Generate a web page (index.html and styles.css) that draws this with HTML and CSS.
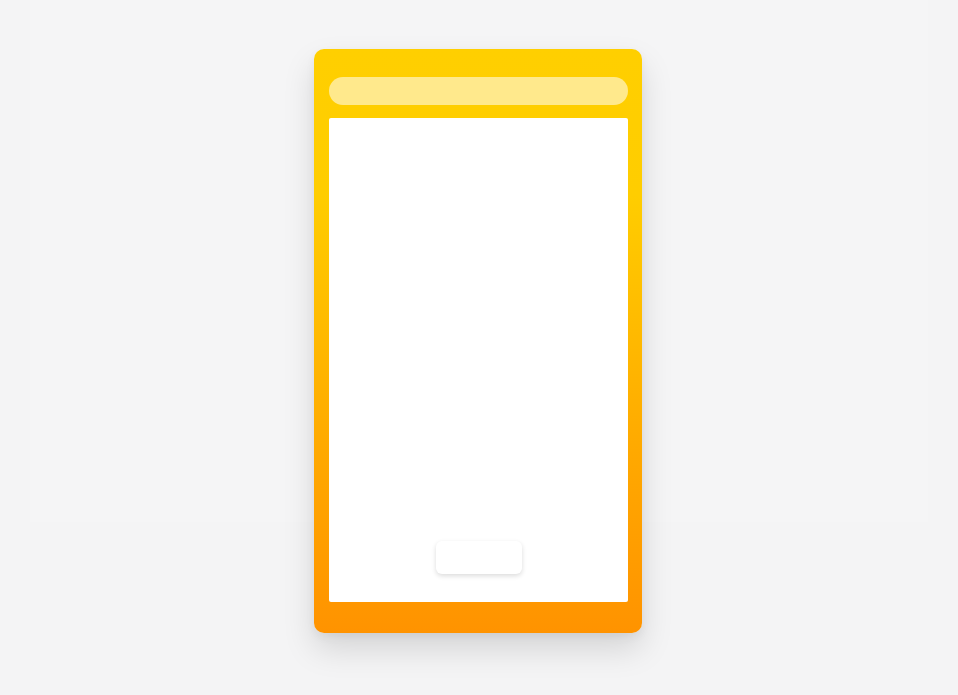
FILE: index.html
```html
<!DOCTYPE html>
<html>
<head>
<meta charset="utf-8">
<link rel="stylesheet" href="styles.css">
</head>
<body>
<div class="card">
  <div class="search"></div>
  <div class="content">
    <div class="button"></div>
  </div>
</div>
</body>
</html>
```
FILE: styles.css
```css
html {
  background: linear-gradient(#f5f5f6, #f5f5f6) 30px 0 / 898px 522px no-repeat, #f4f4f5;
}
body {
  margin: 0;
  padding: 49px 0 62px;
  min-height: 695px;
  box-sizing: border-box;
  font-family: "Liberation Sans", Arial, sans-serif;
}
.card {
  width: 328px;
  height: 584px;
  margin: 0 auto;
  box-sizing: border-box;
  padding: 28px 14px 31px 15px;
  border-radius: 10px;
  background: linear-gradient(180deg, #ffcf00 0%, #ffcd00 25%, #ffa800 70%, #ff9300 100%);
  box-shadow: 0 16px 32px rgba(0, 0, 0, 0.13), 0 4px 10px rgba(0, 0, 0, 0.05);
  display: flex;
  flex-direction: column;
  gap: 13px;
  position: relative;
  left: -1px;
}
.search {
  height: 28px;
  border-radius: 14px;
  background: rgba(255, 255, 255, 0.55);
  flex: none;
}
.content {
  flex: 1;
  background: #fff;
  border-radius: 2px;
  display: flex;
  flex-direction: column;
  align-items: center;
  justify-content: flex-end;
  padding-bottom: 28px;
}
.button {
  width: 86px;
  height: 33px;
  border-radius: 6px;
  background: #fff;
  box-shadow: 0 2px 5px rgba(0, 0, 0, 0.14);
  margin-left: 1px;
}
```
